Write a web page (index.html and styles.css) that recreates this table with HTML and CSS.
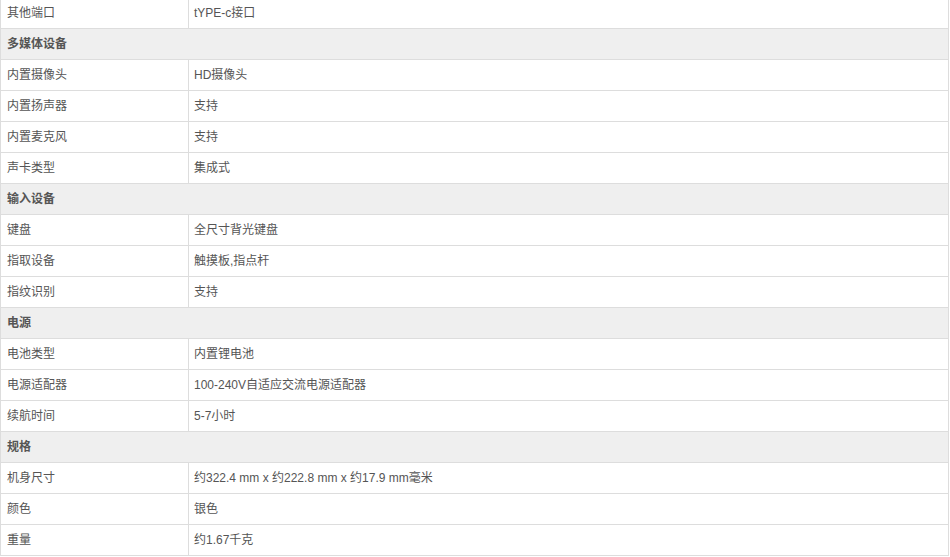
FILE: index.html
```html
<!DOCTYPE html>
<html lang="zh">
<head>
<meta charset="utf-8">
<link rel="stylesheet" href="styles.css">
</head>
<body>
<table class="spec">
<colgroup><col class="c1"><col class="c2"></colgroup>
<tbody>
<tr><td>其他端口</td><td>tYPE-c接口</td></tr>
<tr class="group"><td colspan="2">多媒体设备</td></tr>
<tr><td>内置摄像头</td><td>HD摄像头</td></tr>
<tr><td>内置扬声器</td><td>支持</td></tr>
<tr><td>内置麦克风</td><td>支持</td></tr>
<tr><td>声卡类型</td><td>集成式</td></tr>
<tr class="group"><td colspan="2">输入设备</td></tr>
<tr><td>键盘</td><td>全尺寸背光键盘</td></tr>
<tr><td>指取设备</td><td>触摸板,指点杆</td></tr>
<tr><td>指纹识别</td><td>支持</td></tr>
<tr class="group"><td colspan="2">电源</td></tr>
<tr><td>电池类型</td><td>内置锂电池</td></tr>
<tr><td>电源适配器</td><td>100-240V自适应交流电源适配器</td></tr>
<tr><td>续航时间</td><td>5-7小时</td></tr>
<tr class="group"><td colspan="2">规格</td></tr>
<tr><td>机身尺寸</td><td>约322.4 mm x 约222.8 mm x 约17.9 mm毫米</td></tr>
<tr><td>颜色</td><td>银色</td></tr>
<tr><td>重量</td><td>约1.67千克</td></tr>
</tbody>
</table>
</body>
</html>
```
FILE: styles.css
```css
html, body {
  margin: 0;
  padding: 0;
  background: #fff;
}
.spec {
  border-collapse: collapse;
  width: 949px;
  margin-top: -3px;
  table-layout: fixed;
  font-family: "Liberation Sans", "Noto Sans CJK SC", sans-serif;
  font-size: 12px;
  color: #555;
}
.c1 { width: 188px; }
.spec td {
  border: 1px solid #ddd;
  height: 31px;
  padding: 0 0 0 6px;
  box-sizing: border-box;
  vertical-align: middle;
  line-height: 16px;
}
.spec td + td {
  padding-left: 5px;
}
.spec tr.group td {
  background: #efefef;
  font-weight: bold;
}
```
